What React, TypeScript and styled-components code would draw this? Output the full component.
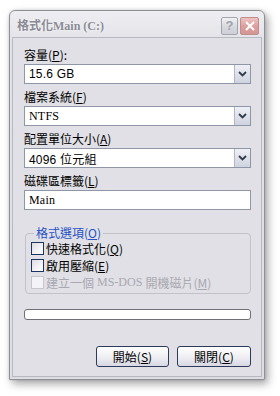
import React from "react";
import styled, { createGlobalStyle } from "styled-components";

const Global = createGlobalStyle`
  html, body { margin: 0; padding: 0; background: #ffffff; }
  body { width: 280px; height: 396px; overflow: hidden; }
`;

const CJK = `"Noto Sans CJK TC", "Noto Sans CJK SC", sans-serif`;
const SANS = `"Liberation Sans", ${CJK}`;
const SERIF = `"Liberation Serif", ${CJK}`;

const Page = styled.div`
  padding: 10px 0 0 9px;
`;

const Window = styled.div`
  width: 256px;
  height: 370px;
  box-sizing: border-box;
  border: 1px solid #8e9098;
  border-radius: 6px 6px 0 0;
  background: linear-gradient(#eeeef2, #e2e2e8 30px, #dedde4);
  box-shadow: 3px 4px 9px rgba(0, 0, 0, 0.35), 0 0 3px rgba(0, 0, 0, 0.15);
  display: flex;
  flex-direction: column;
  padding: 0 2px 2px 2px;
`;

const TitleBar = styled.div`
  height: 26px;
  display: flex;
  align-items: center;
  padding: 0 3px 0 5px;
`;

const Title = styled.div`
  flex: 1;
  font-family: ${SERIF};
  font-weight: bold;
  font-size: 12px;
  color: #8a8b94;
  text-shadow: 0 0 2px #ffffff;
  padding-top: 2px;
`;

const CapButton = styled.div<{ $close?: boolean }>`
  width: ${(p) => (p.$close ? 19 : 17)}px;
  height: 18px;
  margin-left: 2px;
  box-sizing: border-box;
  border: 1px solid ${(p) => (p.$close ? "#c08c8c" : "#a3a5ae")};
  border-radius: 2px;
  background: ${(p) =>
    p.$close
      ? "linear-gradient(#efc3c3, #dca0a0 50%, #d59595)"
      : "linear-gradient(#f2f2f5, #d8d9df 50%, #cfd0d8)"};
  display: flex;
  align-items: center;
  justify-content: center;
  font-family: ${SANS};
  font-size: 13px;
  font-weight: bold;
  color: #a0a2aa;
  margin-top: 3px;
`;

const Client = styled.div`
  flex: 1;
  background: #e1e0e6;
  border: 1px solid #b7b8c0;
  padding: 8px 10px 0 11px;
  display: flex;
  flex-direction: column;
  font-family: ${CJK};
  font-size: 12px;
  color: #000;
`;

const Label = styled.div`
  height: 18px;
  line-height: 18px;
  font-size: 12px;
  white-space: nowrap;
`;

const Field = styled.div<{ $serif?: boolean }>`
  height: 20px;
  box-sizing: border-box;
  border: 1px solid #8f97a6;
  background: #ffffff;
  display: flex;
  align-items: center;
  padding-left: 4px;
  margin-bottom: 4px;
  font-family: ${(p) => (p.$serif ? SERIF : SANS)};
  font-size: 12px;
`;

const FieldText = styled.span`
  flex: 1;
  letter-spacing: 0.2px;
`;

const DropButton = styled.div`
  width: 16px;
  height: 18px;
  box-sizing: border-box;
  border-left: 1px solid #b2b6c2;
  background: linear-gradient(#eef0f6, #cfd3df);
  display: flex;
  align-items: center;
  justify-content: center;
`;

const Group = styled.fieldset`
  margin: 12px 0 0 1px;
  padding: 0 0 4px 5px;
  border: 1px solid #c3c2ca;
  border-radius: 4px;
  height: 62px;
  box-sizing: content-box;
`;

const Legend = styled.legend`
  color: #2552c4;
  font-size: 12px;
  padding: 0 2px;
  margin-left: 3px;
  line-height: 14px;
`;

const CheckRow = styled.label<{ $disabled?: boolean }>`
  display: flex;
  align-items: center;
  height: 17px;
  color: ${(p) => (p.$disabled ? "#a8a8b0" : "#000")};
  white-space: nowrap;
`;

const Box = styled.span<{ $disabled?: boolean }>`
  width: 13px;
  height: 13px;
  box-sizing: border-box;
  border: 1px solid ${(p) => (p.$disabled ? "#c6c6cc" : "#1c3560")};
  background: ${(p) =>
    p.$disabled ? "#f4f4f6" : "linear-gradient(135deg, #dcdce2, #f8f8fa 70%)"};
  margin-right: 2px;
`;

const Latin = styled.span`
  font-family: ${SERIF};
`;

const Progress = styled.div`
  margin-top: 15px;
  height: 11px;
  box-sizing: border-box;
  border: 1px solid #6e6f78;
  border-radius: 3px;
  background: #ffffff;
`;

const ButtonRow = styled.div`
  display: flex;
  justify-content: flex-end;
  gap: 8px;
  margin-top: 26px;
`;

const Button = styled.div<{ $w: number }>`
  width: ${(p) => p.$w}px;
  height: 21px;
  box-sizing: border-box;
  border: 1px solid #2d3a58;
  border-radius: 3px;
  background: linear-gradient(#ffffff, #f0f0f4 50%, #d8d8e4);
  display: flex;
  align-items: center;
  justify-content: center;
  font-size: 12px;
`;

const Chevron = () => (
  <svg width="9" height="6" viewBox="0 0 9 6">
    <path d="M1 1 L4.5 4.5 L8 1" fill="none" stroke="#333a4c" strokeWidth="1.8" />
  </svg>
);

const CloseX = () => (
  <svg width="10" height="10" viewBox="0 0 10 10">
    <path d="M1 1 L9 9 M9 1 L1 9" stroke="#ffffff" strokeWidth="2" />
  </svg>
);

const Combo: React.FC<{ value: string; serif?: boolean }> = ({ value, serif }) => (
  <Field $serif={serif}>
    <FieldText>{value}</FieldText>
    <DropButton>
      <Chevron />
    </DropButton>
  </Field>
);

export default function App() {
  return (
    <>
      <Global />
      <Page>
        <Window>
          <TitleBar>
            <Title>格式化Main (C:)</Title>
            <CapButton>?</CapButton>
            <CapButton $close>
              <CloseX />
            </CapButton>
          </TitleBar>
          <Client>
            <Label>
              容量(<u>P</u>):
            </Label>
            <Combo value="15.6 GB" />
            <Label>
              檔案系統(<u>F</u>)
            </Label>
            <Combo value="NTFS" serif />
            <Label>
              配置單位大小(<u>A</u>)
            </Label>
            <Combo value="4096 位元組" />
            <Label>
              磁碟區標籤(<u>L</u>)
            </Label>
            <Field $serif>
              <FieldText>Main</FieldText>
            </Field>
            <Group>
              <Legend>
                格式選項(<u>O</u>)
              </Legend>
              <CheckRow>
                <Box />
                快速格式化(<u>Q</u>)
              </CheckRow>
              <CheckRow>
                <Box />
                啟用壓縮(<u>E</u>)
              </CheckRow>
              <CheckRow $disabled>
                <Box $disabled />
                建立一個<Latin>&nbsp;MS-DOS&nbsp;</Latin>開機磁片(<u>M</u>)
              </CheckRow>
            </Group>
            <Progress />
            <ButtonRow>
              <Button $w={73}>
                開始(<u>S</u>)
              </Button>
              <Button $w={74}>
                關閉(<u>C</u>)
              </Button>
            </ButtonRow>
          </Client>
        </Window>
      </Page>
    </>
  );
}
